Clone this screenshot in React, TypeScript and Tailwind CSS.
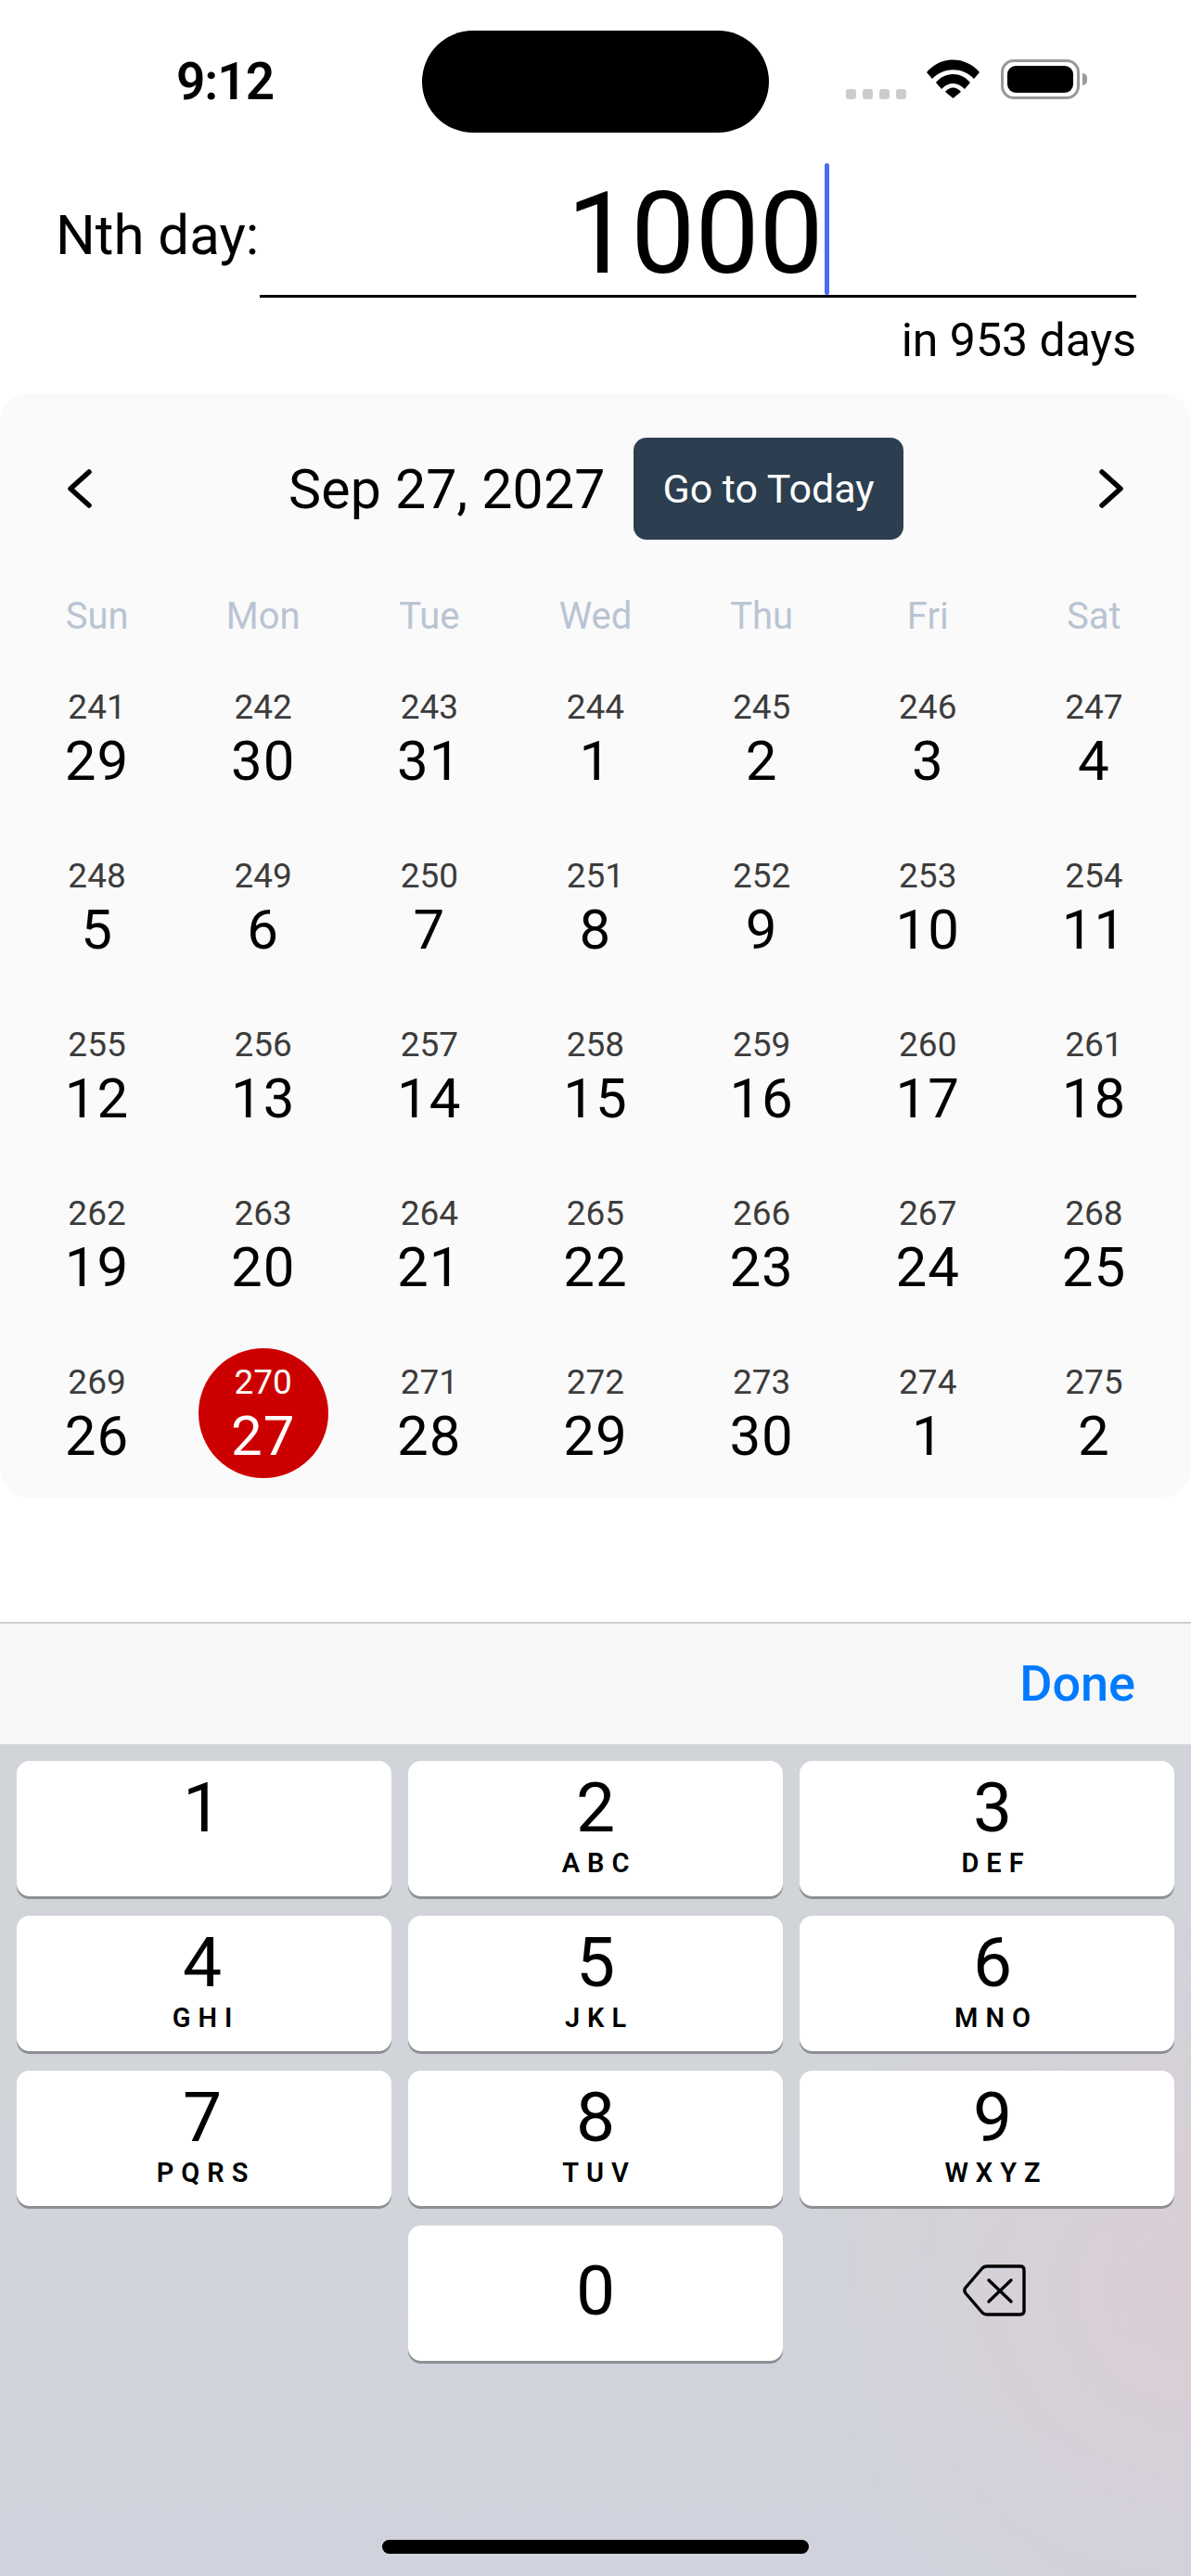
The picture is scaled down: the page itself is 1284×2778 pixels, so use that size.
const weekDays = ["Sun", "Mon", "Tue", "Wed", "Thu", "Fri", "Sat"];

const dates = [
  29, 30, 31, 1, 2, 3, 4, 5, 6, 7, 8, 9, 10, 11, 12, 13, 14, 15, 16, 17, 18, 19, 20, 21, 22, 23, 24, 25, 26, 27, 28, 29,
  30, 1, 2,
];

const keys = [
  ["1", ""],
  ["2", "ABC"],
  ["3", "DEF"],
  ["4", "GHI"],
  ["5", "JKL"],
  ["6", "MNO"],
  ["7", "PQRS"],
  ["8", "TUV"],
  ["9", "WXYZ"],
];

// the digits don't sit dead centre on the outer columns
const keyColumn = ["pr-[4px]", "", "pl-[12px]"];

function StatusBar() {
  return (
    <div className="grid h-[110px] grid-cols-[455px_374px_1fr]">
      <div className="flex items-center justify-center pl-[30px] text-[55px] leading-none font-semibold tracking-[-1px] text-black">
        9:12
      </div>
      <div className="rounded-[55px] bg-black" />
      <div className="flex items-start pl-[83px] pt-[31px]">
        <div className="mt-[32px] flex gap-[7px]">
          {[0, 1, 2, 3].map((i) => (
            <span key={i} className="h-[11px] w-[11px] rounded-[3px] bg-[#cccccc]" />
          ))}
        </div>
        <svg viewBox="0 0 57 42" className="ml-[22px] h-[42px] w-[57px]">
          <path d="M0 14C15-4 42-4 57 14L51 21C39 8 18 8 6 21Z" fill="#000" />
          <path d="M10 25C20 13 37 13 47 25L41 32C33 24 24 24 16 32Z" fill="#000" />
          <path d="M20 35C25 29 32 29 37 35L28.5 42Z" fill="#000" />
        </svg>
        <div className="ml-[23px] flex items-center">
          <div className="h-[43px] w-[85px] rounded-[14px] border-[3px] border-[#999999] p-[4px]">
            <div className="h-full w-full rounded-[9px] bg-black" />
          </div>
          <div className="ml-[3px] h-[13px] w-[5px] rounded-r-full bg-[#999999]" />
        </div>
      </div>
    </div>
  );
}

function Chevron({ right }: { right?: boolean }) {
  return (
    <svg viewBox="0 0 26 42" className="h-[42px] w-[26px]" fill="none" stroke="#000" strokeWidth="5.5" strokeLinecap="round" strokeLinejoin="round">
      <path d={right ? "M3 3L23 21L3 39" : "M23 3L3 21L23 39"} />
    </svg>
  );
}

function DayCell({ date, dayNo }: { date: number; dayNo: number }) {
  const selected = dayNo === 270;
  return (
    <div className="flex justify-center">
      <div
        className={
          selected
            ? "flex h-[140px] w-[140px] flex-col items-center rounded-full bg-[#cc0000] pt-[14px] text-white"
            : "flex h-[140px] w-[140px] flex-col items-center pt-[14px] text-black"
        }
      >
        <div className={selected ? "text-[37px] leading-[46px]" : "text-[37px] leading-[46px] text-[#3c3c3c]"}>{dayNo}</div>
        <div className="text-[60px] leading-[70px] tracking-[1px]">{date}</div>
      </div>
    </div>
  );
}

function Calendar() {
  return (
    <div className="mt-[30px] rounded-[32px] bg-[#fafafa] px-[15px] pt-[48px] pb-[21px]">
      <div className="flex h-[110px] items-center">
        <div className="ml-[58px] w-[26px]">
          <Chevron />
        </div>
        <div className="ml-[212px] w-[372px] text-[59px] leading-none tracking-[0.2px] text-black whitespace-nowrap">Sep 27, 2027</div>
        <div className="flex h-[110px] w-[291px] items-center justify-center rounded-[14px] bg-[#2c3e50] text-[43px] text-white">
          Go to Today
        </div>
        <div className="ml-[211px] w-[26px]">
          <Chevron right />
        </div>
      </div>
      <div className="mt-[58px] grid grid-cols-7">
        {weekDays.map((d) => (
          <div key={d} className="text-center text-[40px] leading-[50px] text-[#b9c4d3]">
            {d}
          </div>
        ))}
      </div>
      <div className="mt-[36px] grid grid-cols-7 gap-y-[42px]">
        {dates.map((d, i) => (
          <DayCell key={i} date={d} dayNo={241 + i} />
        ))}
      </div>
    </div>
  );
}

function Key({ digit, letters, column }: { digit: string; letters?: string; column: string }) {
  return (
    <div className={"flex h-[146px] flex-col items-center rounded-[14px] bg-white text-black shadow-[0_3px_0_#8e8f93] " + column + (letters === undefined ? " justify-center pb-[6px]" : " pt-[10px]")}>
      <div className="text-[75px] leading-[80px]">{digit}</div>
      {letters ? <div className="pt-[3px] pl-[8px] text-[29px] leading-[34px] font-semibold tracking-[8px]">{letters}</div> : null}
    </div>
  );
}

function Keyboard() {
  return (
    <div className="relative flex-1 bg-[radial-gradient(circle_at_1284px_589px,#dbced6_0px,#dbced600_420px),linear-gradient(#d1d4d9,#d1d4d9_45%,#d0d3dd)] px-[18px] pt-[18px]">
      <div className="grid grid-cols-3 gap-x-[18px] gap-y-[21px]">
        {keys.map(([d, l], i) => (
          <Key key={d} digit={d} letters={l} column={keyColumn[i % 3]} />
        ))}
        <div />
        <Key digit="0" column="" />
        <div className="flex items-center justify-center pb-[6px] pl-[16px]">
          <svg viewBox="0 0 68 56" className="h-[56px] w-[68px]" fill="none" stroke="#000" strokeWidth="3.4" strokeLinejoin="round" strokeLinecap="round">
            <path d="M26 2H62C64.5 2 66 3.5 66 6V50C66 52.5 64.5 54 62 54H26C24 54 22.5 53.4 21 52L3 31C1.6 29.2 1.6 26.8 3 25L21 4C22.5 2.6 24 2 26 2Z" />
            <path d="M28 17L52 40M52 17L28 40" />
          </svg>
        </div>
      </div>
      <div className="absolute bottom-[24px] left-[412px] h-[15px] w-[460px] rounded-full bg-black" />
    </div>
  );
}

export default function App() {
  return (
    <div
      className="flex h-[2778px] w-[1284px] flex-col overflow-hidden bg-white pt-[33px]"
      style={{ fontFamily: "Roboto, 'Noto Sans', sans-serif" }}
    >
      <StatusBar />
      <div className="mt-[33px] flex items-end pr-[59px] pl-[60px]">
        <div className="w-[220px] pb-[32px] text-[60px] leading-[70px] whitespace-nowrap text-black">Nth day:</div>
        <div className="flex h-[145px] flex-1 items-center justify-center border-b-[3px] border-black">
          <span className="mt-[10px] text-[123px] leading-none text-black">1000</span>
          <span className="ml-[1px] h-full w-[5px] rounded-full bg-[#4a6cf0]" />
        </div>
      </div>
      <div className="pt-[19px] pr-[59px] text-right text-[50px] leading-[54px] text-black">in 953 days</div>
      <Calendar />
      <div className="mt-[134px] flex h-[132px] items-center justify-end border-t-2 border-[#cfcfd1] bg-[#f7f7f7] pr-[60px]">
        <span className="text-[54px] leading-none font-medium text-[#007aff]">Done</span>
      </div>
      <Keyboard />
    </div>
  );
}
